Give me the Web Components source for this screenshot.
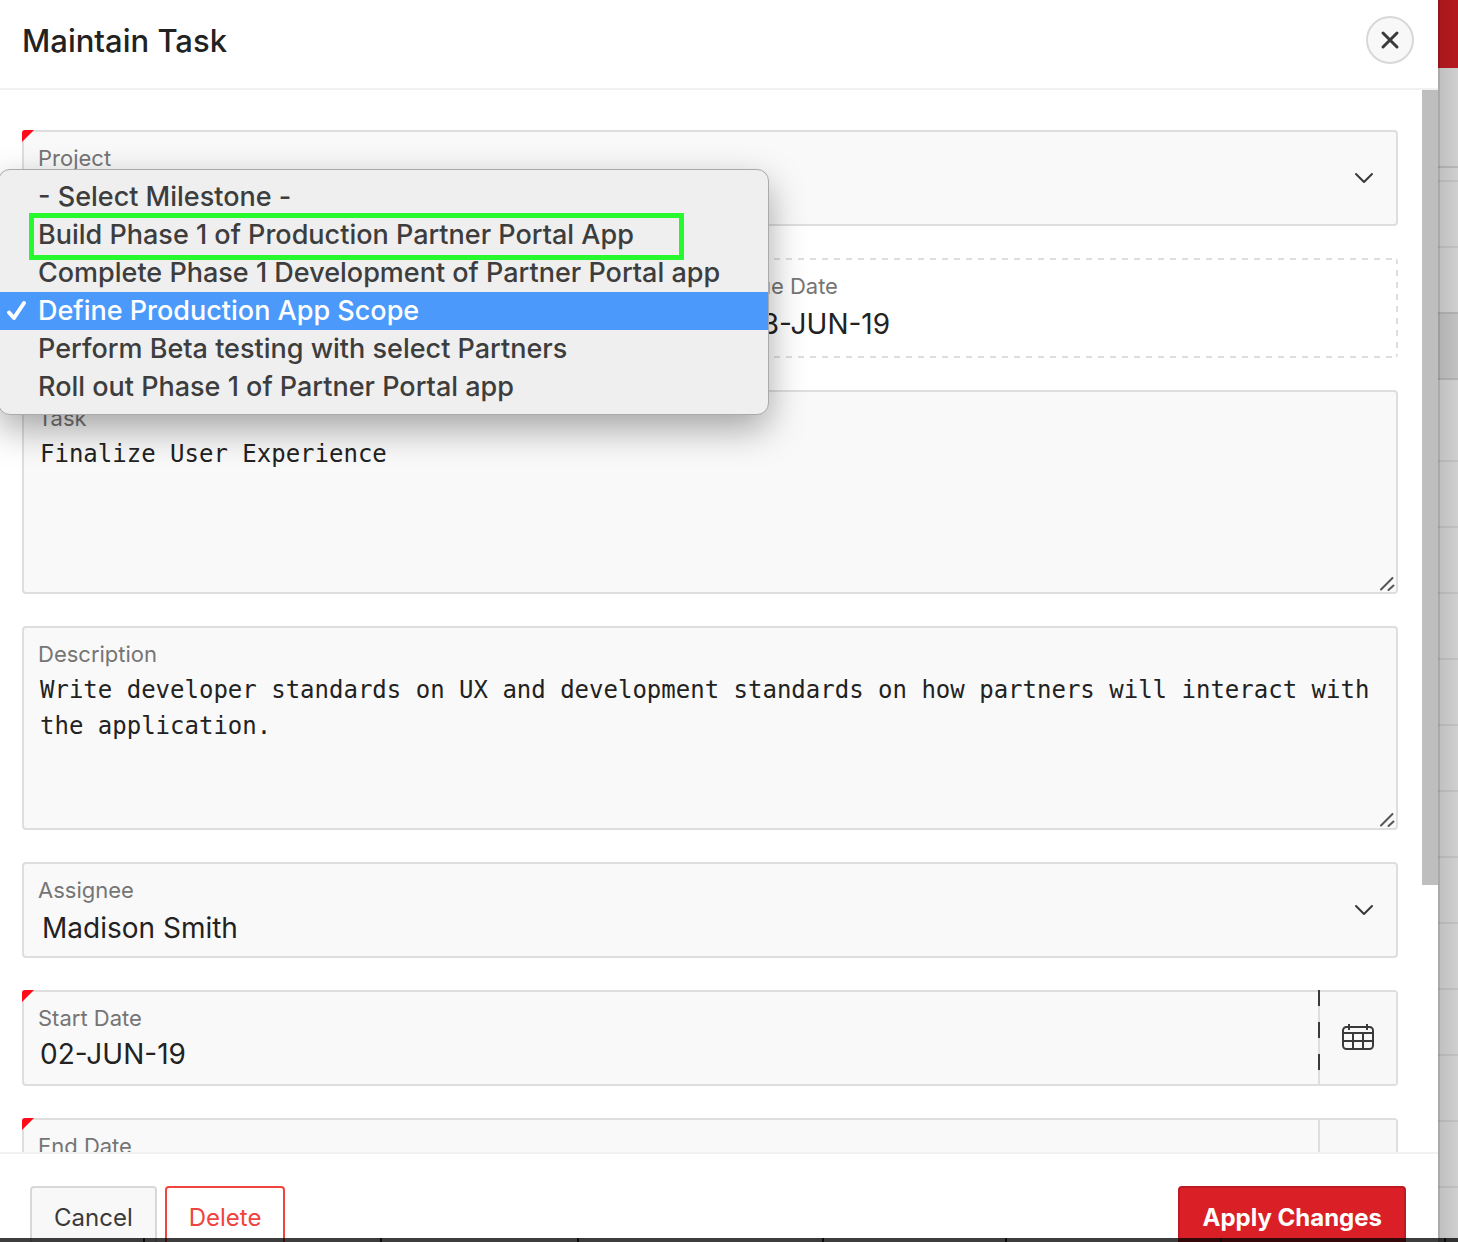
<!DOCTYPE html>
<html lang="en">
<head>
<meta charset="utf-8">
<title>Maintain Task</title>
<style>
  html, body { height: 100%; margin: 0; }
  body {
    overflow: hidden;
    font-family: Inter, "Liberation Sans", sans-serif;
    color: #222;
    --line: #dedede;
    --field: #f9f9f9;
    --muted: #757575;
    --ink: #3a3a3a;
    --mono: "DejaVu Sans Mono", "Liberation Mono", monospace;
  }
</style>
</head>
<body>
<task-screen></task-screen>
<script>
const make = (tag, html, setup) => customElements.define(tag, class extends HTMLElement {
  constructor() {
    super();
    const root = this.attachShadow({ mode: "open" });
    root.innerHTML = `<style>*, ::before, ::after, :host::before, :host::after {box-sizing:border-box} :host{display:block;box-sizing:border-box}</style>` + html;
  }
  connectedCallback() { if (setup) setup(this, this.shadowRoot); }
});

/* Shared frame of a form item: border, label and required corner */
make("field-box", `
<style>
  :host { position: relative; border: 2px solid var(--line); border-radius: 4px; background: var(--field); min-height: 96px; }
  :host([readonly]) { --h: repeating-linear-gradient(90deg, var(--line) 0 6px, transparent 6px 12px);
    --v: repeating-linear-gradient(var(--line) 0 6px, transparent 6px 12px);
    border-color: transparent; min-height: 100px;
    background: var(--h) top / 100% 2px no-repeat border-box, var(--h) bottom / 100% 2px no-repeat border-box,
      var(--v) left / 2px 100% no-repeat border-box, var(--v) right / 2px 100% no-repeat border-box; }
  :host([required])::before { content: ""; position: absolute; left: -2px; top: -2px; width: 12px; height: 12px;
    border-top-left-radius: 3px; background: #ff0a19; clip-path: polygon(0 0, 100% 0, 0 100%); }
</style>
<slot></slot>`);

make("select-field", `
<style>
  label { position: absolute; left: 14px; top: 12px; font-size: 22px; line-height: 28px; color: var(--muted); pointer-events: none; }
  select { display: block; appearance: none; width: 100%; height: 92px; padding: 36px 60px 0 18px; border: 0; background: none;
    font: 28px/40px Inter, "Liberation Sans", sans-serif; color: #222; outline: 0; }
  svg { position: absolute; right: 20px; top: 34px; width: 24px; height: 24px; pointer-events: none; }
  :host([open]) label { display: none; }
</style>
<field-box><label for="c"></label><select id="c"></select>
<svg viewBox="0 0 24 24" fill="none" stroke="#3a3a3a" stroke-width="2" stroke-linecap="round" stroke-linejoin="round"><path d="M4 8l8 8 8-8"/></svg></field-box>`,
(el, root) => {
  root.querySelector("label").textContent = el.getAttribute("label");
  const select = root.querySelector("select");
  select.setAttribute("aria-label", el.getAttribute("label"));
  select.add(new Option(el.getAttribute("value") || ""));
  root.querySelector("field-box").toggleAttribute("required", el.hasAttribute("required"));
});

make("area-field", `
<style>
  field-box { padding: 12px 14px 0; height: 204px; }
  label { display: block; font-size: 22px; line-height: 28px; color: var(--muted); }
  textarea { display: block; width: 100%; height: 144px; padding: 4px 2px; border: 0; resize: none; background: none; outline: 0;
    font: 24px/36px var(--mono); color: #222; overflow: hidden; }
  svg { position: absolute; right: 0; bottom: 0; width: 18px; height: 18px; }
</style>
<field-box><label for="c"></label><textarea id="c"></textarea>
<svg viewBox="0 0 18 18" stroke="#555" stroke-width="2" stroke-linecap="round"><path d="M3 15.500L14.500 4M10.500 16L15.500 11.500"/></svg></field-box>`,
(el, root) => {
  root.querySelector("label").textContent = el.getAttribute("label");
  root.querySelector("textarea").value = el.getAttribute("value");
});

make("date-field", `
<style>
  field-box { display: flex; height: 96px; }
  .text { flex: 1; min-width: 0; padding: 12px 14px 0; }
  label { display: block; font-size: 22px; line-height: 28px; color: var(--muted); }
  input { display: block; width: 100%; height: 44px; padding: 0 2px; border: 0; background: none; outline: 0;
    font: 28px/44px Inter, "Liberation Sans", sans-serif; color: #222; }
  button { width: 78px; border: 0; border-left: 2px solid var(--line); background: #f8f8f8; padding: 0 0 2px; display: grid; place-items: center; position: relative; }
  :host([marked]) button::before { content: ""; position: absolute; left: -2px; top: -2px; width: 2px; height: 80px;
    background: repeating-linear-gradient(#3a3a3a 0 16px, transparent 16px 32px); }
  svg { width: 32px; height: 28px; display: block; }
</style>
<field-box><div class="text"><label for="c"></label><input id="c"></div>
<button aria-label="Open calendar"><svg viewBox="0 0 32 28" fill="none" stroke="#3a3a3a" stroke-width="2"><rect x="1" y="4" width="30" height="22" rx="3.500"/><path d="M1 10h30M1 18h30M11 10v16M21 10v16M7 1v6M25 1v6"/></svg></button></field-box>`,
(el, root) => {
  root.querySelector("label").textContent = el.getAttribute("label");
  root.querySelector("input").value = el.getAttribute("value") || "";
  root.querySelector("field-box").setAttribute("required", "");
});

make("readonly-field", `
<style>
  field-box { padding: 12px 14px 0; }
  .label { font-size: 22px; line-height: 28px; color: var(--muted); }
  .value { font-size: 28px; line-height: 44px; padding: 2px 2px 0; }
</style>
<field-box readonly><div class="label"><slot name="label"></slot></div><div class="value"><slot></slot></div></field-box>`);

make("option-menu", `
<style>
  :host { border: 1px solid #aaa; border-radius: 12px; background: #efefef; padding: 8px 0; color: #3d3d3d;
    box-shadow: 0 14px 36px rgba(0,0,0,.34); }
</style>
<div role="listbox" aria-label="Milestone"><slot></slot></div>`);

make("menu-option", `
<style>
  :host { position: relative; height: 38px; padding-left: 39px; font-size: 27px; font-weight: 500; line-height: 38px; white-space: nowrap; }
  :host([selected]) { background: #4b9afb; color: #fff; }
  :host([outlined])::after { content: ""; position: absolute; left: 30px; top: -3px; width: 655px; height: 47px; border: 5px solid #28f92e; }
  svg { display: none; position: absolute; left: 7px; top: 8px; width: 22px; height: 22px; }
  :host([selected]) svg { display: block; }
</style>
<svg viewBox="0 0 22 22" fill="none" stroke="#fff" stroke-width="4" stroke-linecap="round" stroke-linejoin="round"><path d="M3 12.500L8 18 18 3"/></svg><slot></slot>`);

make("action-button", `
<style>
  button { height: 64px; padding: 0 22px; border: 2px solid #d8d8d8; border-radius: 4px; background: #f8f8f8; color: #3a3a3a;
    font: 24px/60px Inter, "Liberation Sans", sans-serif; display: block; white-space: nowrap; }
  :host([kind=danger]) button { background: #fff; border-color: #f0443e; color: #f0443e; }
  :host([kind=primary]) button { background: #da1f26; border-color: #bd1b21; color: #fff; font-weight: 700; }
</style>
<button><slot></slot></button>`);

make("task-dialog", `
<style>
  :host { display: flex; flex-direction: column; min-width: 0; background: #fff; }
  header { display: flex; align-items: center; justify-content: space-between; height: 90px; padding: 0 24px 8px 22px; border-bottom: 2px solid #f1f1f1; }
  h1 { margin: 0; padding-top: 2px; font-size: 31px; line-height: 44px; font-weight: 500; }
  .close { width: 48px; height: 48px; padding: 0; border: 2px solid #d8d8d8; border-radius: 50%; background: #f8f8f8; display: grid; place-items: center; }
  .close svg { width: 20px; height: 20px; }
  .body { flex: 1; min-height: 0; display: flex; }
  .form { flex: 1; min-width: 0; overflow: hidden; padding: 40px 24px 0 22px; display: flex; flex-direction: column; gap: 32px; }
  .form > * { flex: none; }
  .pair { display: grid; grid-template-columns: 1fr 1fr; gap: 32px; }
  .milestone { position: relative; z-index: 1; }
  option-menu { position: absolute; left: -24px; top: -89px; width: 771px; }
  .track { width: 16px; }
  .thumb { height: calc(75% - 2px); background: #bebebe; }
  footer { display: flex; gap: 8px; height: 90px; padding: 32px 32px 0 30px; border-top: 2px solid #f1f1f1; overflow: hidden; }
  .space { flex: 1; }
</style>
<header><h1>Maintain Task</h1>
<button class="close" aria-label="Close"><svg viewBox="0 0 20 20" stroke="#3a3a3a" stroke-width="3" stroke-linecap="round"><path d="M3 3l14 14M17 3L3 17"/></svg></button></header>
<div class="body"><div class="form">
  <select-field label="Project" required></select-field>
  <div class="pair">
    <div class="milestone"><select-field label="Milestone" open></select-field>
      <option-menu>
        <menu-option role="option">- Select Milestone -</menu-option>
        <menu-option role="option" outlined>Build Phase 1 of Production Partner Portal App</menu-option>
        <menu-option role="option">Complete Phase 1 Development of Partner Portal app</menu-option>
        <menu-option role="option" selected aria-selected="true">Define Production App Scope</menu-option>
        <menu-option role="option">Perform Beta testing with select Partners</menu-option>
        <menu-option role="option">Roll out Phase 1 of Partner Portal app</menu-option>
      </option-menu>
    </div>
    <readonly-field><span slot="label">Due Date</span>03-JUN-19</readonly-field>
  </div>
  <area-field label="Task" value="Finalize User Experience"></area-field>
  <area-field label="Description" value="Write developer standards on UX and development standards on how partners will interact with the application."></area-field>
  <select-field label="Assignee" value="Madison Smith"></select-field>
  <date-field label="Start Date" value="02-JUN-19" marked></date-field>
  <date-field label="End Date"></date-field>
</div><div class="track"><div class="thumb"></div></div></div>
<footer><action-button>Cancel</action-button><action-button kind="danger">Delete</action-button><span class="space"></span><action-button kind="primary">Apply Changes</action-button></footer>`);

/* Dimmed page that shows beside the dialog */
make("page-behind", `
<style>
  :host { position: relative; overflow: hidden; background: #cfcfcf; }
  :host::after { content: ""; position: absolute; inset: 0; background: linear-gradient(90deg, rgba(0,0,0,.18) 2px, rgba(0,0,0,.07) 2px, transparent); }
  .top { height: 68px; background: #b5191f; }
  .bar { height: 100px; border-bottom: 2px solid #b7b7b7; margin-bottom: 12px; }
  .row { height: 66px; border-top: 2px solid #c1c1c1; }
  .group { background: #c1c1c1; border-color: #b2b2b2; }
  .tall { height: 82px; border-color: #b2b2b2; }
</style>
<div class="top"></div><div class="bar"></div><div class="row"></div><div class="row"></div><div class="row group"></div><div class="row tall"></div>
${'<div class="row"></div>'.repeat(12)}`);

make("task-screen", `
<style>
  :host { position: relative; display: grid; grid-template-columns: minmax(0, 1fr) 20px; grid-template-rows: minmax(0, 1fr); height: 100vh; overflow: hidden; }
  .edge { position: absolute; inset: auto 0 0; height: 4px; background: rgba(0,0,0,.76); }
  .edge svg { display: block; width: 100%; height: 4px; }
</style>
<task-dialog></task-dialog><page-behind></page-behind>
<div class="edge"><svg viewBox="0 0 1458 4" preserveAspectRatio="none" fill="#0c0c0c"><path d="M143 0h2v4h-2zM380 0h2v4h-2zM577 0h2v4h-2zM822 0h2v4h-2zM1005 0h2v4h-2zM1220 0h2v4h-2zM1444 0h2v4h-2z"/></svg></div>`);
</script>
</body>
</html>
